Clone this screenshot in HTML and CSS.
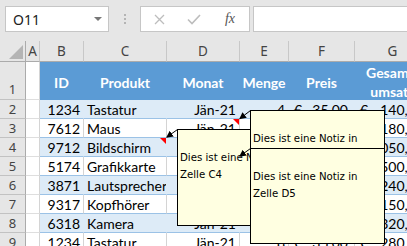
FILE: index.html
```html
<!DOCTYPE html>
<html lang="de">
<head>
    <meta charset="UTF-8">
    <title>Umsatzliste</title>
    <link rel="stylesheet" href="styles.css">
</head>
<body>
    <div class="formula-bar">
        <div class="name-box">O11<span class="caret"></span></div>
        <div class="grip"><span></span><span></span><span></span></div>
        <div class="fx-box">
            <span class="fx-btn cancel"><svg width="11" height="11" viewBox="0 0 11 11"><path d="M1 1L10 10M10 1L1 10" stroke="#bdbdbd" stroke-width="1.3"/></svg></span>
            <span class="fx-btn enter"><svg width="14" height="11" viewBox="0 0 14 11"><path d="M1 5.5L5 9.5L13 1" fill="none" stroke="#bdbdbd" stroke-width="1.6"/></svg></span>
            <span class="fx-btn fx">fx</span>
        </div>
        <div class="formula-input"></div>
    </div>

    <div class="sheet">
        <div class="row hdr">
            <div class="rh corner"><span class="corner-tri"></span></div>
            <div class="a">A</div>
            <div class="b">B</div>
            <div class="c">C</div>
            <div class="d">D</div>
            <div class="e">E</div>
            <div class="f">F</div>
            <div class="g">G</div>
        </div>
        <div class="row r1">
            <div class="rh">1</div>
            <div class="a"></div>
            <div class="b th">ID</div>
            <div class="c th">Produkt</div>
            <div class="d th">Monat</div>
            <div class="e th">Menge</div>
            <div class="f th">Preis</div>
            <div class="g th">Gesamt-<br>umsatz</div>
        </div>
        <div class="row band">
            <div class="rh">2</div>
            <div class="a"></div>
            <div class="b num">1234</div>
            <div class="c">Tastatur</div>
            <div class="d num">Jän-21</div>
            <div class="e num">4</div>
            <div class="f acct"><span>€</span><span>35,00</span></div>
            <div class="g acct"><span>€</span><span>140,00</span></div>
        </div>
        <div class="row">
            <div class="rh">3</div>
            <div class="a"></div>
            <div class="b num">7612</div>
            <div class="c">Maus</div>
            <div class="d num flag">Jän-21</div>
            <div class="e num">12</div>
            <div class="f acct"><span>€</span><span>15,00</span></div>
            <div class="g acct"><span>€</span><span>180,00</span></div>
        </div>
        <div class="row band">
            <div class="rh">4</div>
            <div class="a"></div>
            <div class="b num">9712</div>
            <div class="c flag">Bildschirm</div>
            <div class="d num">Jän-21</div>
            <div class="e num">3</div>
            <div class="f acct"><span>€</span><span>350,00</span></div>
            <div class="g acct"><span>€</span><span>1.050,00</span></div>
        </div>
        <div class="row">
            <div class="rh">5</div>
            <div class="a"></div>
            <div class="b num">5174</div>
            <div class="c">Grafikkarte</div>
            <div class="d num flag">Jän-21</div>
            <div class="e num">2</div>
            <div class="f acct"><span>€</span><span>250,00</span></div>
            <div class="g acct"><span>€</span><span>500,00</span></div>
        </div>
        <div class="row band">
            <div class="rh">6</div>
            <div class="a"></div>
            <div class="b num">3871</div>
            <div class="c">Lautsprecher</div>
            <div class="d num">Jän-21</div>
            <div class="e num">4</div>
            <div class="f acct"><span>€</span><span>60,00</span></div>
            <div class="g acct"><span>€</span><span>240,00</span></div>
        </div>
        <div class="row">
            <div class="rh">7</div>
            <div class="a"></div>
            <div class="b num">9317</div>
            <div class="c">Kopfhörer</div>
            <div class="d num">Jän-21</div>
            <div class="e num">3</div>
            <div class="f acct"><span>€</span><span>50,00</span></div>
            <div class="g acct"><span>€</span><span>150,00</span></div>
        </div>
        <div class="row band">
            <div class="rh">8</div>
            <div class="a"></div>
            <div class="b num">6318</div>
            <div class="c">Kamera</div>
            <div class="d num">Jän-21</div>
            <div class="e num">4</div>
            <div class="f acct"><span>€</span><span>80,00</span></div>
            <div class="g acct"><span>€</span><span>320,00</span></div>
        </div>
        <div class="row">
            <div class="rh">9</div>
            <div class="a"></div>
            <div class="b num">1234</div>
            <div class="c">Tastatur</div>
            <div class="d num">Jän-21</div>
            <div class="e num">8</div>
            <div class="f acct"><span>€</span><span>35,00</span></div>
            <div class="g acct"><span>€</span><span>280,00</span></div>
        </div>

        <!-- Notizen -->
        <div class="note note-c4"><br>Dies ist eine Notiz in<br>Zelle C4</div>
        <svg class="arrows" width="407" height="205" viewBox="0 0 407 205">
            <defs>
                <marker id="head" viewBox="0 0 6 6" refX="5" refY="3" markerUnits="userSpaceOnUse" markerWidth="7" markerHeight="7" orient="auto">
                    <path d="M0 0L6 3L0 6z" fill="#000"/>
                </marker>
            </defs>
            <line x1="250.5" y1="69.5" x2="240" y2="77.5" stroke="#000" stroke-width="1" marker-end="url(#head)"/>
            <line x1="177.5" y1="88.5" x2="167" y2="96" stroke="#000" stroke-width="1" marker-end="url(#head)"/>
            <line x1="250.5" y1="107.5" x2="240" y2="115" stroke="#000" stroke-width="1" marker-end="url(#head)"/>
        </svg>
        <div class="note note-d3"><br>Dies ist eine Notiz in<br>Zelle D3</div>
        <div class="note note-d5"><br>Dies ist eine Notiz in<br>Zelle D5</div>
    </div>
</body>
</html>
```

FILE: styles.css
```css
* {
    box-sizing: border-box;
    margin: 0;
    padding: 0;
}

body {
    width: 407px;
    height: 246px;
    overflow: hidden;
    background: #fff;
    font-family: "Lato", sans-serif;
}

/* Bearbeitungsleiste */
.formula-bar {
    display: flex;
    align-items: flex-start;
    height: 41px;
    padding: 6px 0 0 5px;
    background: #e6e6e6;
}

.name-box {
    width: 104px;
    height: 26px;
    display: flex;
    align-items: center;
    justify-content: space-between;
    padding: 0 6px 0 7px;
    background: #fff;
    border: 1px solid #c6c6c6;
    font-family: "Noto Sans", sans-serif;
    font-size: 14px;
    color: #222;
}

.caret {
    width: 0;
    height: 0;
    border-left: 4px solid transparent;
    border-right: 4px solid transparent;
    border-top: 4px solid #777;
}

.grip {
    width: 31px;
    display: flex;
    flex-direction: column;
    align-items: center;
    gap: 2px;
    padding-top: 8px;
}

.grip span {
    width: 2px;
    height: 2px;
    background: #b4b4b4;
}

.fx-box {
    width: 110px;
    height: 26px;
    display: flex;
    background: #fff;
    border: 1px solid #c6c6c6;
}

.fx-btn {
    display: flex;
    align-items: center;
    justify-content: center;
}

.cancel { width: 36px; }
.enter { width: 34px; }

.fx {
    width: 38px;
    font-family: "Liberation Serif", serif;
    font-style: italic;
    font-size: 14px;
    color: #555;
}

.formula-input {
    flex: 1;
    height: 26px;
    margin-left: 3px;
    background: #fff;
    border: 1px solid #c6c6c6;
    border-right: none;
}

/* Tabelle */
.sheet {
    position: relative;
}

.row {
    display: flex;
    height: 19px;
}

.row > div {
    flex: none;
    display: flex;
    align-items: center;
    padding: 0 3px;
    border-right: 1px solid #d4d4d4;
    border-bottom: 1px solid #9bc2e6;
    white-space: nowrap;
    overflow: hidden;
    font-size: 14px;
    color: #000;
}

.rh { width: 26px; }
.a { width: 14px; }
.b { width: 44px; }
.c { width: 83px; }
.d { width: 73px; }
.e { width: 49px; }
.f { width: 66px; }
.g { width: 76px; }

.row > .rh {
    justify-content: center;
    align-items: flex-end;
    padding: 0;
    background: #e6e6e6;
    border-right-color: #ababab;
    border-bottom-color: #c2c2c2;
    font-family: "Noto Sans", sans-serif;
    font-size: 13px;
    color: #444;
}

.row > .a {
    border-bottom-color: #dedede;
}

.row.hdr {
    height: 21px;
}

.row.hdr > div {
    justify-content: center;
    padding: 0;
    background: #e6e6e6;
    border-right-color: #c8c8c8;
    border-bottom-color: #ababab;
    font-family: "Noto Sans", sans-serif;
    font-size: 13.5px;
    color: #444;
}

.row.hdr > .corner {
    justify-content: flex-end;
    align-items: flex-end;
    padding: 0 2px 2px 0;
    border-right-color: #ababab;
}

.corner-tri {
    width: 14px;
    height: 14px;
    background: #b4b4b4;
    clip-path: polygon(100% 0, 100% 100%, 0 100%);
}

.row.r1 {
    height: 38px;
}

.row.r1 > .rh {
    padding-bottom: 1px;
}

.row > .th {
    justify-content: center;
    text-align: center;
    line-height: 19px;
    padding-top: 3px;
    background: #5b9bd5;
    border-color: #5b9bd5;
    color: #fff;
    font-weight: bold;
}

.row.band > .b,
.row.band > .c,
.row.band > .d,
.row.band > .e,
.row.band > .f,
.row.band > .g {
    background: #ddebf7;
    border-right-color: #ddebf7;
}

.row > .num {
    justify-content: flex-end;
}

.row > .acct {
    justify-content: space-between;
    padding: 0 6px 0 5px;
}

.flag {
    position: relative;
}

.flag::after {
    content: "";
    position: absolute;
    top: 0;
    right: 0;
    width: 6px;
    height: 6px;
    background: #f00;
    clip-path: polygon(0 0, 100% 0, 100% 100%);
}

/* Notizen */
.note {
    position: absolute;
    width: 135px;
    padding: 2px 2px 2px 2px;
    background: #ffffe1;
    border: 1px solid #000;
    font-family: "DejaVu Sans", sans-serif;
    font-size: 10.2px;
    line-height: 17px;
    color: #000;
    white-space: nowrap;
    overflow: hidden;
}

.note-c4 {
    left: 177px;
    top: 88px;
    height: 97px;
}

.note-d3 {
    left: 250px;
    top: 69px;
    height: 96px;
}

.note-d5 {
    left: 250px;
    top: 107px;
    height: 96px;
}

.arrows {
    position: absolute;
    left: 0;
    top: 0;
}
```
